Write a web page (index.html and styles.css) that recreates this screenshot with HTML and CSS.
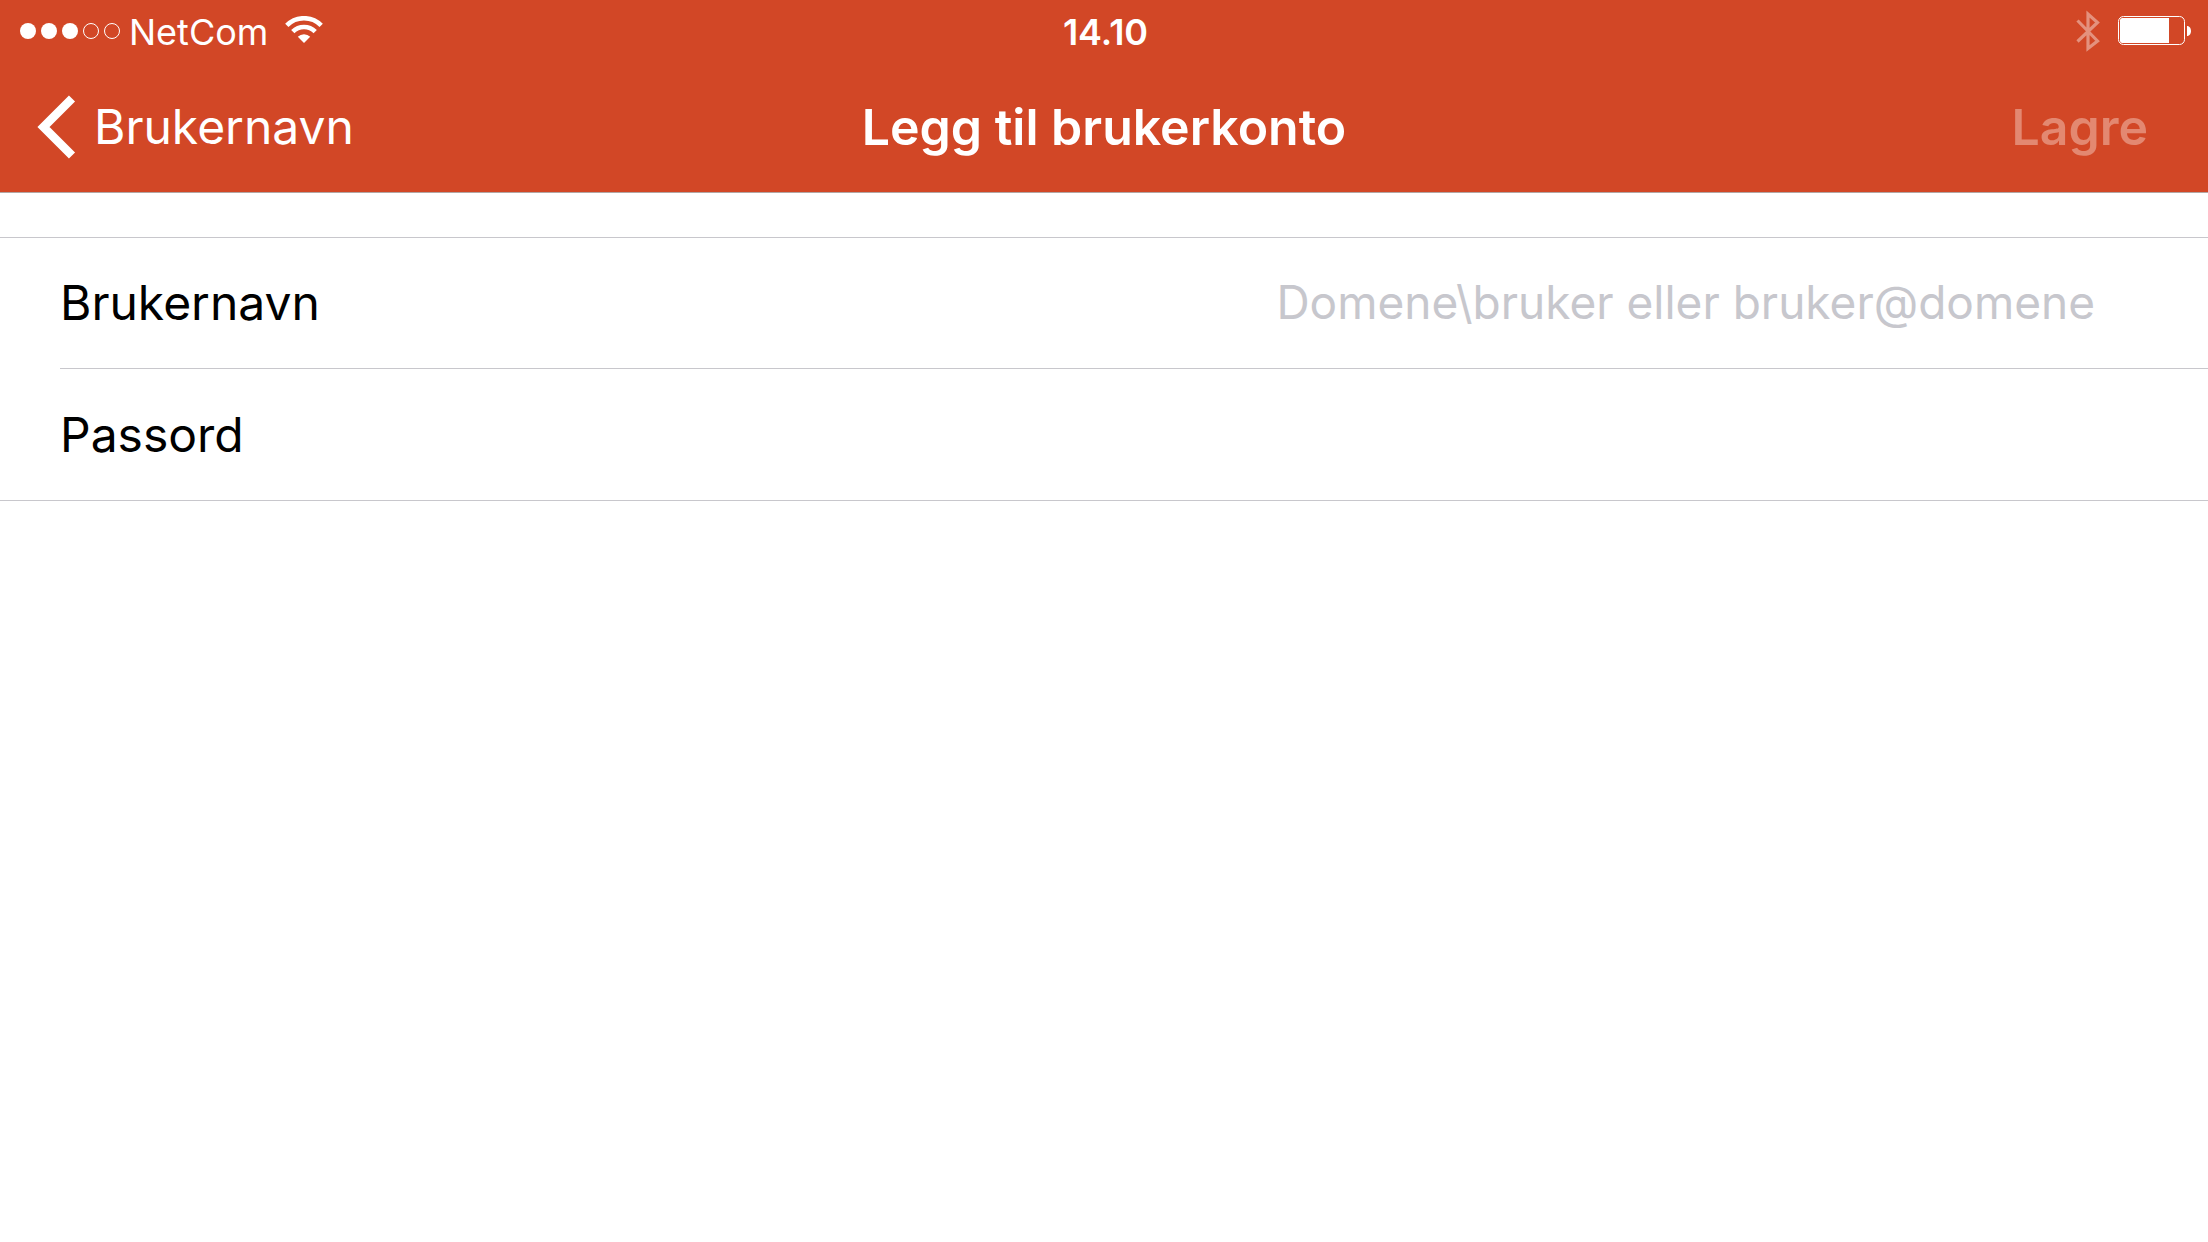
FILE: index.html
```html
<!DOCTYPE html>
<html lang="nb">
<head>
<meta charset="utf-8">
<meta name="viewport" content="width=device-width, initial-scale=1">
<title>Legg til brukerkonto</title>
<link rel="stylesheet" href="styles.css">
</head>
<body>
<header class="header">
  <div class="status">
    <div class="status-left">
      <svg class="signal" width="100" height="16" viewBox="0 0 100 16" role="img" aria-label="Signal">
        <g fill="#fff"><circle cx="8" cy="8" r="8"/><circle cx="29" cy="8" r="8"/><circle cx="50" cy="8" r="8"/></g>
        <g fill="none" stroke="#fff"><circle cx="71" cy="8" r="7.5"/><circle cx="92" cy="8" r="7.5"/></g>
      </svg>
      <span class="carrier">NetCom</span>
      <svg class="wifi" width="38" height="28" viewBox="0 0 38 28" role="img" aria-label="Wi-Fi">
        <g fill="none" stroke="#fff" stroke-width="4.6">
          <path d="M1.8 9.4A24.2 24.2 0 0 1 36.2 9.4"/>
          <path d="M7.8 15.6A15.8 15.8 0 0 1 30.2 15.6"/>
        </g>
        <path d="M12.8 20.8A8.8 8.8 0 0 1 25.2 20.8L19 27z" fill="#fff"/>
      </svg>
    </div>
    <time class="clock">14.10</time>
    <div class="status-right">
      <svg class="bluetooth" width="24" height="42" viewBox="0 0 24 42" role="img" aria-label="Bluetooth">
        <path d="M1.5 10.5L21.500 31L12 38.500V4L21.500 12.500L1.500 31.500" fill="none" stroke="#fff" stroke-width="3.200"/>
      </svg>
      <svg width="73" height="30" viewBox="0 0 73 30" role="img" aria-label="Batteri">
        <rect x=".5" y=".5" width="66" height="28" rx="5" fill="none" stroke="#fff"/>
        <path d="M4.500 2H51V27H4.500A2.500 2.500 0 0 1 2 24.500V4.500A2.500 2.500 0 0 1 4.500 2z" fill="#fff"/>
        <path d="M69 10C74.300 10 74.300 20 69 20z" fill="#fff"/>
      </svg>
    </div>
  </div>
  <nav class="nav">
    <button class="back" type="button">
      <svg width="39" height="64" viewBox="0 0 39 64" aria-hidden="true">
        <path d="M35 3.500L6.500 32L35 60.500" fill="none" stroke="#fff" stroke-width="8.600"/>
      </svg>
      <span>Brukernavn</span>
    </button>
    <h1 class="title">Legg til brukerkonto</h1>
    <button class="save" type="submit" form="account" disabled>Lagre</button>
  </nav>
</header>
<main>
  <form class="list" id="account">
    <div class="row">
      <label for="username">Brukernavn</label>
      <input id="username" type="text" placeholder="Domene\bruker eller bruker@domene">
    </div>
    <div class="row">
      <label for="password">Passord</label>
      <input id="password" type="password">
    </div>
  </form>
</main>
</body>
</html>
```
FILE: styles.css
```css
* {
  box-sizing: border-box;
}

body {
  margin: 0;
  background: #fff;
  color: #000;
  font-family: Inter, "Liberation Sans", sans-serif;
  font-size: 48px;
  line-height: 60px;
}

button,
input {
  margin: 0;
  padding: 0;
  border: 0;
  background: none;
  font: inherit;
}

svg {
  display: block;
  flex: none;
}

.header {
  background: #d24726;
  border-bottom: 1px solid #b2a6a4;
  color: #fff;
}

.status,
.nav {
  display: grid;
  grid-template-columns: 1fr auto 1fr;
  align-items: center;
}

.status {
  height: 60px;
  padding: 0 17px 0 20px;
  font-size: 36px;
}

.status-left,
.status-right {
  display: flex;
  align-items: center;
  padding-bottom: 1px;
}

.carrier {
  margin: 2px 17px 0 9px;
}

.wifi {
  margin-bottom: 2px;
}

.clock {
  font-weight: 600;
}

.status-right {
  justify-content: flex-end;
  gap: 18px;
}

.bluetooth {
  opacity: 0.4;
}

.nav {
  height: 132px;
  padding: 1px 60px 0;
}

.back {
  display: flex;
  align-items: center;
  justify-self: start;
  gap: 18px;
  margin-left: -23px;
  color: #fff;
}

.title {
  margin: 0;
  font-size: 50px;
  font-weight: 600;
}

.save {
  justify-self: end;
  color: #e38871;
  font-size: 50px;
  font-weight: 600;
}

.list {
  margin-top: 44px;
  border-top: 1px solid #c8c7cc;
  border-bottom: 1px solid #c8c7cc;
}

.row {
  display: flex;
  align-items: center;
  height: 130px;
  margin-left: 60px;
  padding-right: 113px;
}

.row + .row {
  height: 132px;
  border-top: 1px solid #c8c7cc;
}

.row input {
  flex: 1;
  min-width: 0;
  padding-bottom: 3px;
  font-size: 46px;
  text-align: right;
  outline: 0;
}

.row input::placeholder {
  color: #c7c7cd;
  opacity: 1;
}
```
